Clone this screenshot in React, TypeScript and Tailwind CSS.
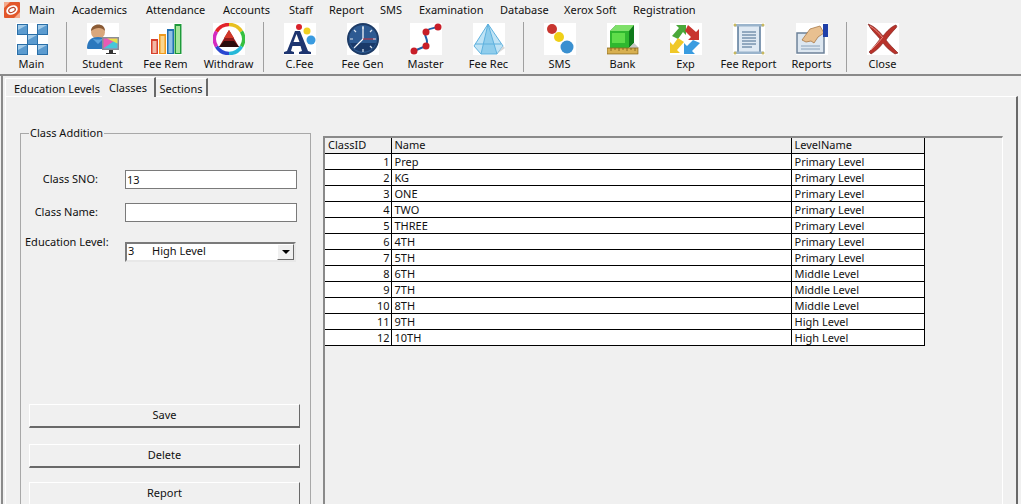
import type { ReactNode } from 'react';

const menus = [
  ['Main', 'w-[43px]'],
  ['Academics', 'w-[74px]'],
  ['Attendance', 'w-[77px]'],
  ['Accounts', 'w-[66px]'],
  ['Staff', 'w-[40px]'],
  ['Report', 'w-[51px]'],
  ['SMS', 'w-[39px]'],
  ['Examination', 'w-[81px]'],
  ['Database', 'w-[64px]'],
  ['Xerox Soft', 'w-[69px]'],
  ['Registration', 'w-[80px]'],
];

const rows = [
  [1, 'Prep', 'Primary Level'],
  [2, 'KG', 'Primary Level'],
  [3, 'ONE', 'Primary Level'],
  [4, 'TWO', 'Primary Level'],
  [5, 'THREE', 'Primary Level'],
  [6, '4TH', 'Primary Level'],
  [7, '5TH', 'Primary Level'],
  [8, '6TH', 'Middle Level'],
  [9, '7TH', 'Middle Level'],
  [10, '8TH', 'Middle Level'],
  [11, '9TH', 'High Level'],
  [12, '10TH', 'High Level'],
];

function Ico({ children }: { children: ReactNode }) {
  return (
    <svg viewBox="0 0 32 32" className="w-8 h-8 bg-white">
      {children}
    </svg>
  );
}

function Logo() {
  return (
    <svg viewBox="0 0 16 16" className="w-4 h-4 shrink-0">
      <rect width="16" height="16" rx="1" fill="#e2572b" />
      <path d="M0 0h6L0 6zM16 16h-6l6-6z" fill="#f4a98c" />
      <ellipse cx="8" cy="8" rx="6" ry="4.5" fill="#fff" transform="rotate(-25 8 8)" />
      <ellipse cx="8" cy="8" rx="3.5" ry="2.2" fill="none" stroke="#b5432a" strokeWidth="1.2" transform="rotate(-25 8 8)" />
    </svg>
  );
}

function Square({ x, y }: { x: number; y: number }) {
  return (
    <g>
      <rect x={x} y={y} width="11" height="11" fill="#2a6fa8" />
      <rect x={x + 1} y={y + 1} width="9" height="9" fill="#5b9bcf" />
      <path d={`M${x + 1} ${y + 1}h9l-9 5z`} fill="#a3cbe8" />
    </g>
  );
}

const icons: Record<string, ReactNode> = {
  Main: (
    <Ico>
      <Square x={1} y={1} />
      <Square x={21} y={1} />
      <Square x={11} y={11} />
      <Square x={1} y={21} />
      <Square x={21} y={21} />
    </Ico>
  ),
  Student: (
    <Ico>
      <circle cx="11" cy="9" r="7" fill="#d9a77c" />
      <path d="M4 8C4 0 18 -1 18 8 15 4 9 4 4 8z" fill="#8a5a34" />
      <path d="M0 25c0-8 5-11 11-11s10 3 10 7v5H3c-2 0-3 0-3-1z" fill="#2c78bd" />
      <path d="M5 15c3 2 8 2 12 0l-6 6z" fill="#5fa4dc" />
      <rect x="15" y="14" width="17" height="13" fill="#8a8f94" />
      <rect x="16.500" y="15.500" width="14" height="10" fill="#e85bb5" />
      <path d="M16.500 25.500 30.500 15.500v10z" fill="#47c6d8" />
      <path d="M20 15.500h10.500v5z" fill="#e6e24a" />
      <path d="M19 31h10v-1h-3v-3h-4v3h-3z" fill="#333" />
    </Ico>
  ),
  'Fee Rem': (
    <Ico>
      <rect x="1" y="16" width="7" height="15" fill="#d8402c" />
      <rect x="2.500" y="18" width="4" height="12" fill="#f2b7a5" />
      <rect x="9" y="11" width="7" height="20" fill="#ef9a1e" />
      <rect x="10.500" y="13" width="4" height="17" fill="#fbd68e" />
      <rect x="17" y="6" width="7" height="25" fill="#1f6fb2" />
      <rect x="18.500" y="8" width="4" height="22" fill="#8fc0e6" />
      <rect x="24.500" y="1" width="7" height="30" fill="#1e9a3a" />
      <rect x="26" y="3" width="4" height="27" fill="#a5e59a" />
    </Ico>
  ),
  Withdraw: (
    <Ico>
      <path d="M16 1.500a14.500 14.500 0 0 1 12.500 7" fill="none" stroke="#e8c020" strokeWidth="3.500" />
      <path d="M28.500 8.500a14.500 14.500 0 0 1 0 15" fill="none" stroke="#35c040" strokeWidth="3.500" />
      <path d="M28.500 23.500a14.500 14.500 0 0 1-12.500 7" fill="none" stroke="#26b8d8" strokeWidth="3.500" />
      <path d="M16 30.500a14.500 14.500 0 0 1-12.500-7" fill="none" stroke="#2a48d0" strokeWidth="3.500" />
      <path d="M3.500 23.500a14.500 14.500 0 0 1 0-15" fill="none" stroke="#d42ac0" strokeWidth="3.500" />
      <path d="M3.500 8.500a14.500 14.500 0 0 1 12.500-7" fill="none" stroke="#e2242a" strokeWidth="3.500" />
      <path d="M16 7 26 24H6z" fill="#8c1b1b" />
      <path d="M16 7 21 15H11z" fill="#d2382a" />
      <path d="M6 24 11 18h10l5 6z" fill="#2c0c0c" />
    </Ico>
  ),
  'C.Fee': (
    <Ico>
      <path fillRule="evenodd" d="M0 31v-2l3-1L11 8h5l8 20 3 1v2H15v-2l3-1-1.500-5h-8L7 28l3 1v2zM9.500 19h6L12.500 11z" fill="#1d3570" />
      <circle cx="15" cy="4" r="3" fill="#d8222a" />
      <circle cx="23" cy="8" r="3.500" fill="#f0d020" />
      <circle cx="27" cy="17" r="4.500" fill="#3a9be0" />
    </Ico>
  ),
  'Fee Gen': (
    <Ico>
      <circle cx="16" cy="16" r="16" fill="#1d3b66" />
      <circle cx="16" cy="16" r="14" fill="#2d5a92" />
      <path d="M3 20h26a14 14 0 0 1-26 0z" fill="#1a3a6a" />
      <path d="M16 16V4M16 16l-7 7" stroke="#fff" strokeWidth="1.200" fill="none" />
      <path d="M16 16h12" stroke="#c9303a" strokeWidth="1" />
      <path d="M16 3v3M16 26v3M3 16h3M26 16h3M7 7l2 2M25 7l-2 2M7 25l2-2M25 25l-2-2" stroke="#dde6f0" strokeWidth="1.200" />
    </Ico>
  ),
  Master: (
    <Ico>
      <path d="M4 28 16 23C20 16 12 12 16 8 20 5 24 5 28 4" fill="none" stroke="#1f5fa8" strokeWidth="2" />
      <circle cx="4" cy="28" r="3.500" fill="#c81e28" />
      <circle cx="16" cy="23" r="3.500" fill="#c81e28" />
      <circle cx="16" cy="9" r="3.500" fill="#c81e28" />
      <circle cx="28" cy="4" r="3.500" fill="#c81e28" />
    </Ico>
  ),
  'Fee Rec': (
    <Ico>
      <path d="M15 1 1 23l7 8h16l6-8z" fill="#bfe3f5" />
      <path d="M15 1 8 31h16z" fill="#8fcdec" />
      <path d="M15 1 1 23l7 8h16l6-8zM15 1 8 31M15 1l9 30M2 21h26" fill="none" stroke="#5eb1de" strokeWidth="1" />
      <path d="M30 23l2 2-8 6z" fill="#d8d8d8" />
    </Ico>
  ),
  SMS: (
    <Ico>
      <circle cx="8" cy="6" r="5" fill="#c8352f" />
      <circle cx="15" cy="14" r="5" fill="#f0d018" />
      <circle cx="23" cy="24" r="6.500" fill="#3a90d0" />
    </Ico>
  ),
  Bank: (
    <Ico>
      <path d="M3 8 9 2h18v18l-5 5H3z" fill="#0f7a1c" />
      <path d="M3 8h19v17H3z" fill="#2fb82f" />
      <path d="M5 10h13v10H5z" fill="#5fdd4a" />
      <path d="M3 8 9 2h18l-5 6z" fill="#7fe06a" />
      <path d="M22 25l5-5 5 5z" fill="#c8c8c8" />
      <rect x="0" y="25" width="31" height="6" fill="#d8b050" stroke="#8a6a20" strokeWidth="0.800" />
      <path d="M4 25v3M8 25v2M12 25v3M16 25v2M20 25v3M24 25v2M28 25v3" stroke="#7a5a18" strokeWidth="0.800" />
    </Ico>
  ),
  Exp: (
    <Ico>
      <path d="M2 13 9 5 6 2h10v10l-3-3-5 7z" fill="#4aa83a" />
      <path d="M18 2l8 7 3-3v11H18l3-3-6-6z" fill="#c8352f" />
      <path d="M14 19 7 27l3 3H0V19l3 3 5-7z" fill="#f0c828" />
      <path d="M30 20l-8 8 3 3H14V20l3 3 6-6z" fill="#3a9ce0" />
    </Ico>
  ),
  'Fee Report': (
    <Ico>
      <rect x="5" y="2" width="22" height="28" fill="#dfe9f3" stroke="#5a7a9a" strokeWidth="1.500" />
      <rect x="1" y="1" width="30" height="2.500" rx="1" fill="#9ab4cc" />
      <rect x="1" y="28.500" width="30" height="2.500" rx="1" fill="#9ab4cc" />
      <path d="M9 9h14M9 12h14M9 15h14M9 18h14M9 21h14M9 24h10" stroke="#44688c" strokeWidth="1" />
      <circle cx="2" cy="2" r="1.500" fill="#c8b860" />
      <circle cx="30" cy="2" r="1.500" fill="#c8b860" />
      <circle cx="2" cy="30" r="1.500" fill="#c8b860" />
      <circle cx="30" cy="30" r="1.500" fill="#c8b860" />
    </Ico>
  ),
  Reports: (
    <Ico>
      <rect x="1" y="10" width="27" height="20" fill="#dde7f0" stroke="#6c8198" strokeWidth="1.500" />
      <path d="M5 23h19M5 26h19" stroke="#8aa2ba" strokeWidth="1" />
      <path d="M6 17 14 6l10-3 4 7-6 4-4 6-3-2-5 1z" fill="#e8c090" stroke="#a87848" strokeWidth="0.800" />
      <rect x="27" y="1" width="5" height="13" fill="#1f3fa8" />
    </Ico>
  ),
  Close: (
    <Ico>
      <path d="M1 1c6 2 11 7 15 12C20 8 25 3 29 2c1 1 1 2 0 3-4 4-8 9-10 12 3 4 8 9 12 13l-3 1c-5-3-9-7-12-11-3 4-7 8-12 11l-2-2c4-4 8-9 11-13C9 11 4 7 1 1z" fill="#b8322a" stroke="#7a1c18" strokeWidth="0.600" />
      <path d="M3 3c5 3 9 7 13 12M4 27c4-4 8-8 11-12" fill="none" stroke="#e88a80" strokeWidth="1" />
    </Ico>
  ),
};

function Tool({ name }: { name: string }) {
  return (
    <div className="w-[63px] h-[54px] flex flex-col items-center pt-[3px]">
      {icons[name]}
      <span className="mt-[1px] leading-[16px] whitespace-nowrap">{name}</span>
    </div>
  );
}

function Sep() {
  return (
    <div className="w-[8px] h-[50px] mt-[2px] pl-[3px]">
      <div className="w-px h-full bg-[#a0a0a0]" />
    </div>
  );
}

function Btn({ label, mb }: { label: string; mb: string }) {
  return (
    <button className={'block w-[271px] h-[24px] shrink-0 bg-[#f0f0f0] border border-t-white border-l-white border-r-[#696969] border-b-[#696969] border-b-2 ' + mb}>
      {label}
    </button>
  );
}

export default function App() {
  return (
    <div className="w-[1021px] h-[504px] overflow-hidden bg-[#f0f0f0] text-[#111] text-[11px] font-['Noto_Sans',sans-serif]">
      {/* menu */}
      <div className="h-[20px] flex items-center pl-[4px]">
        <Logo />
        <div className="flex ml-[1px]">
          {menus.map(([m, w]) => (
            <span key={m} className={'pl-[8px] leading-[20px] whitespace-nowrap ' + w}>{m}</span>
          ))}
        </div>
      </div>

      {/* toolbar */}
      <div className="h-[56px] flex border-b-2 border-b-[#8a8a8a]">
        <Tool name="Main" />
        <Sep />
        <Tool name="Student" />
        <Tool name="Fee Rem" />
        <Tool name="Withdraw" />
        <Sep />
        <Tool name="C.Fee" />
        <Tool name="Fee Gen" />
        <Tool name="Master" />
        <Tool name="Fee Rec" />
        <Sep />
        <Tool name="SMS" />
        <Tool name="Bank" />
        <Tool name="Exp" />
        <Tool name="Fee Report" />
        <Tool name="Reports" />
        <Sep />
        <Tool name="Close" />
      </div>

      <div className="ml-[1px] h-[428px] border-l-2 border-l-[#8a8a8a] pl-[2px]">
        {/* tabs */}
        <div className="h-[20px] flex items-end">
          <div className="h-[18px] w-[97px] border-t border-l border-white pl-[8px] leading-[19px] whitespace-nowrap">Education Levels</div>
          <div className="h-[20px] w-[54px] -mb-px z-10 bg-[#f0f0f0] border-t border-t-white border-r-2 border-r-[#696969] text-center leading-[20px]">Classes</div>
          <div className="h-[18px] w-[52px] border-t border-t-white border-r-2 border-r-[#696969] text-center leading-[19px]">Sections</div>
        </div>

        {/* tab page */}
        <div className="w-[1013px] h-[408px] border-l border-t border-white border-r-2 border-r-[#696969] flex pl-[14px] pt-[29px]">
          <fieldset className="w-[291px] h-[420px] shrink-0 border border-[#a8a8a8] pl-[8px]">
            <legend className="px-[1px] leading-[14px]">Class Addition</legend>
            <div className="flex items-center mt-[30px]">
              <label className="w-[69px] text-right whitespace-nowrap">Class SNO:</label>
              <input readOnly value="13" className="ml-[27px] w-[172px] h-[19px] bg-white border border-[#7a7a7a] px-[1px] outline-none" />
            </div>
            <div className="flex items-center mt-[14px]">
              <label className="w-[69px] text-right whitespace-nowrap">Class Name:</label>
              <input readOnly value="" className="ml-[27px] w-[172px] h-[19px] bg-white border border-[#7a7a7a] px-[1px] outline-none" />
            </div>
            <div className="flex items-start mt-[20px]">
              <label className="w-[80px] -ml-[4px] -mt-[7px] leading-[14px] whitespace-nowrap">Education Level:</label>
              <div className="ml-[20px] w-[171px] h-[20px] bg-white border-2 border-t-[#7a7a7a] border-l-[#7a7a7a] border-r-[#e8e8e8] border-b-[#e8e8e8] flex items-center">
                <span className="w-[25px] pl-[1px] pb-[2px]">3</span>
                <span className="flex-1 pb-[2px]">High Level</span>
                <span className="w-[17px] h-[16px] bg-[#f0f0f0] border border-t-white border-l-white border-r-[#696969] border-b-[#696969] flex items-center justify-center">
                  <span className="w-0 h-0 border-l-[4px] border-r-[4px] border-t-[4px] border-l-transparent border-r-transparent border-t-black" />
                </span>
              </div>
            </div>
            <div className="mt-[142px] flex flex-col">
              <Btn label="Save" mb="mb-[16px]" />
              <Btn label="Delete" mb="mb-[14px]" />
              <Btn label="Report" mb="mb-0" />
            </div>
          </fieldset>

          {/* grid */}
          <div className="ml-[12px] w-[680px] h-[400px] mt-[10px] border-t-2 border-l-2 border-t-[#8a8a8a] border-l-[#8a8a8a] border-r border-r-white">
            <table className="border-collapse table-fixed w-[599px] bg-white">
              <colgroup>
                <col className="w-[66px]" />
                <col className="w-[400px]" />
                <col className="w-[133px]" />
              </colgroup>
              <thead>
                <tr className="h-[15px] bg-[#f0f0f0]">
                  <th className="border border-black border-t-0 border-l-0 font-normal text-left pl-[3px] leading-[14px] p-0">ClassID</th>
                  <th className="border border-black border-t-0 font-normal text-left pl-[3px] leading-[14px] p-0">Name</th>
                  <th className="border border-black border-t-0 font-normal text-left pl-[3px] leading-[14px] p-0">LevelName</th>
                </tr>
              </thead>
              <tbody>
                {rows.map((r) => (
                  <tr key={r[0]} className="h-[16px]">
                    <td className="border border-black border-l-0 text-right pr-[1px] leading-[15px] p-0">{r[0]}</td>
                    <td className="border border-black pl-[3px] leading-[15px] p-0">{r[1]}</td>
                    <td className="border border-black pl-[3px] leading-[15px] p-0">{r[2]}</td>
                  </tr>
                ))}
              </tbody>
            </table>
          </div>
        </div>
      </div>
    </div>
  );
}
